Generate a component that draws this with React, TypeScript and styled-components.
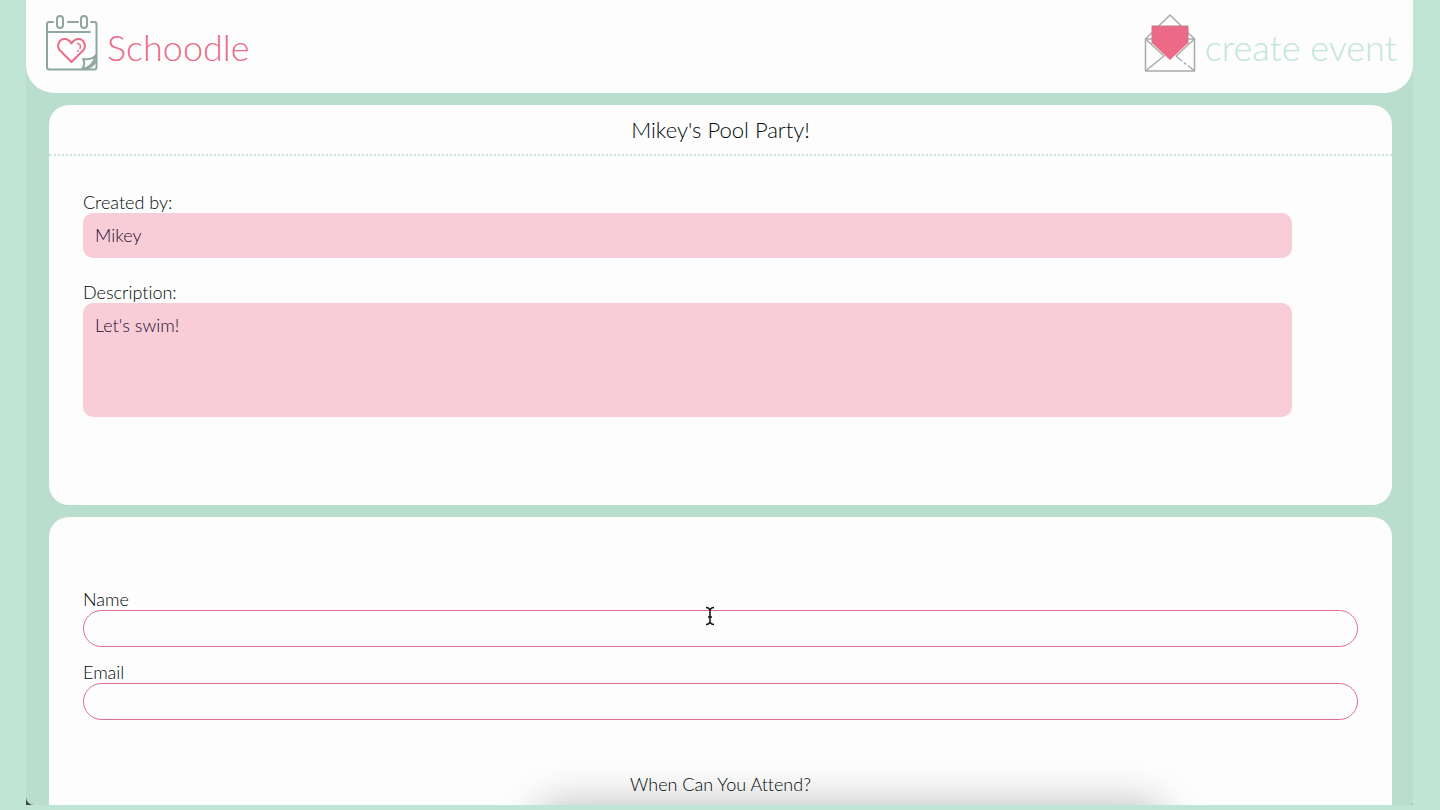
import React from "react";
import styled, { createGlobalStyle } from "styled-components";

const pink = "#ec6a88";
const mint = "#c1e5d5";

const GlobalStyle = createGlobalStyle`
  *, *::before, *::after { box-sizing: border-box; }
  body {
    margin: 0;
    background: ${mint};
    color: #000a08;
    font-family: Lato, "Open Sans", sans-serif;
    font-weight: 300;
    font-size: 18px;
    line-height: 24px;
    font-variant-ligatures: none;
  }
`;

const Desktop = styled.div`
  height: 100vh;
  padding: 0 27px 5px 26px;
`;

const WindowFrame = styled.div`
  height: 100%;
  background: linear-gradient(90deg, #3e4b45 50%, #8fb0a2 50%);
`;

const Page = styled.div`
  position: relative;
  height: 100%;
  overflow: hidden;
  background: #badece;
  border-radius: 0 0 3px 8px;
`;

const Header = styled.header`
  display: flex;
  align-items: center;
  justify-content: space-between;
  height: 93px;
  padding: 0 16px 8px 20px;
  background: #fdfdfd;
  border-radius: 0 0 28px 28px;
`;

const HeaderLink = styled.a<{ $color: string }>`
  display: flex;
  align-items: center;
  gap: 9px;
  color: ${(p) => p.$color};
  font-size: 36px;
  line-height: 48px;
  text-decoration: none;

  span { padding-top: 8px; }
`;

const Main = styled.main`
  display: flex;
  flex-direction: column;
  gap: 12px;
  padding: 12px 21px 0 23px;
`;

const Card = styled.section`
  background: #fdfdfd;
  border-radius: 20px;
`;

const CardTitle = styled.h1`
  margin: 0;
  padding: 11px 0 10px;
  border-bottom: 2px dotted #c9e6da;
  font-size: 22px;
  font-weight: 300;
  line-height: 28px;
  text-align: center;
`;

const Details = styled.dl`
  display: flex;
  flex-direction: column;
  gap: 21px;
  margin: 0;
  padding: 33px 100px 88px 34px;
`;

const Term = styled.dt`
  height: 24px;
  line-height: 26px;
`;

const Value = styled.dd<{ $rows?: number }>`
  min-height: ${(p) => (p.$rows ? p.$rows * 23 + 22 : 45)}px;
  margin: 0;
  padding: 12px;
  background: #f9cdd8;
  border-radius: 10px;
  color: #1d0c2c;
  line-height: 21px;
`;

const Form = styled.form`
  display: flex;
  flex-direction: column;
  gap: 12px;
  padding: 69px 34px 60px;
`;

const Field = styled.div`
  position: relative;
  display: flex;
  flex-direction: column;
`;

const Label = styled.label`
  height: 24px;
  line-height: 26px;
`;

const TextInput = styled.input`
  height: 37px;
  padding: 0 16px;
  background: transparent;
  border: 1px solid #dc6f8b;
  border-radius: 19px;
  font: inherit;
  color: inherit;
  outline: none;
`;

const Question = styled.h2`
  margin: 40px 0 0;
  font-size: 18px;
  font-weight: 300;
  line-height: 24px;
  text-align: center;
`;

const TextCursor = styled.svg`
  position: absolute;
  left: calc(50% - 16px);
  top: 20px;
  pointer-events: none;
`;

const DockShadow = styled.div`
  position: absolute;
  left: 37%;
  right: 18%;
  top: 100%;
  height: 60px;
  border-radius: 20px;
  box-shadow: 0 0 40px 2px rgba(0, 0, 0, 0.25);
  pointer-events: none;
`;

const CalendarLogo = () => (
  <svg width="52" height="58" viewBox="0 0 52 58" fill="none" aria-hidden="true">
    <g stroke="#8fa79d" strokeWidth="2" strokeLinecap="round" strokeLinejoin="round">
      <path d="M7 8H3Q1 8 1 10V53Q1 55.500 3.500 55.500H48Q50.500 55.500 50.500 53V10Q50.500 8 48.500 8H45" />
      <path d="M22 8H32M2 18H44" />
      <rect x="11" y="2" width="6" height="12" rx="3" />
      <rect x="35" y="2" width="6" height="12" rx="3" />
      <path d="M50 41Q47 46 37 45Q40 50 36 55Q47 54 50 41" />
      <path d="M39 55Q47 53 50 47" />
    </g>
    <path
      d="M25.500 48L14 36.500C10 32 13 25 18.500 25C22 25 24 27 25.500 29.500C27 27 29 25 32.500 25C38 25 41 32 37 36.500Z"
      stroke={pink}
      strokeWidth="2"
      strokeLinejoin="round"
    />
    <path d="M31.500 29.500Q35.500 30 34 34.500" stroke={pink} strokeWidth="1.500" strokeLinecap="round" />
    <circle cx="32" cy="37" r="1" fill={pink} />
  </svg>
);

const EnvelopeLogo = () => (
  <svg width="52" height="58" viewBox="0 0 52 58" fill="none" aria-hidden="true">
    <g stroke="#a9acab" strokeWidth="1.500" strokeLinejoin="round">
      <path d="M1.500 25L26 1L50.500 25V57H1.500Z" />
      <path d="M1.500 25H50.500M1.500 25L20 42L1.500 57M50.500 25L32 42" />
      <path d="M32 42L38 47M40 48.500L42 50.500M44 51.500L50.500 57" />
    </g>
    <path d="M8 12H44V29L26 46L8 29Z" fill={pink} />
    <path d="M8 30V12H44V30" stroke="#c7788d" strokeWidth="1" />
  </svg>
);

export default function App() {
  return (
    <>
      <GlobalStyle />
      <Desktop>
        <WindowFrame>
          <Page>
            <Header>
              <HeaderLink href="#home" $color={pink}>
                <CalendarLogo />
                <span>Schoodle</span>
              </HeaderLink>
              <HeaderLink href="#create" $color={mint}>
                <EnvelopeLogo />
                <span>create event</span>
              </HeaderLink>
            </Header>
            <Main>
              <Card>
                <CardTitle>Mikey's Pool Party!</CardTitle>
                <Details>
                  <div>
                    <Term>Created by:</Term>
                    <Value>Mikey</Value>
                  </div>
                  <div>
                    <Term>Description:</Term>
                    <Value $rows={4}>Let's swim!</Value>
                  </div>
                </Details>
              </Card>
              <Card>
                <Form>
                  <Field>
                    <Label htmlFor="name">Name</Label>
                    <TextInput id="name" type="text" />
                    <TextCursor width="10" height="20" viewBox="0 0 10 20" fill="none" aria-hidden="true">
                      <path
                        d="M1 1.500Q4 1.500 5 4Q6 1.500 9 1.500M5 4V16M1 18.500Q4 18.500 5 16Q6 18.500 9 18.500M3 11H7"
                        stroke="#111"
                        strokeWidth="1.500"
                      />
                    </TextCursor>
                  </Field>
                  <Field>
                    <Label htmlFor="email">Email</Label>
                    <TextInput id="email" type="email" />
                  </Field>
                  <Question>When Can You Attend?</Question>
                </Form>
              </Card>
            </Main>
            <DockShadow />
          </Page>
        </WindowFrame>
      </Desktop>
    </>
  );
}
